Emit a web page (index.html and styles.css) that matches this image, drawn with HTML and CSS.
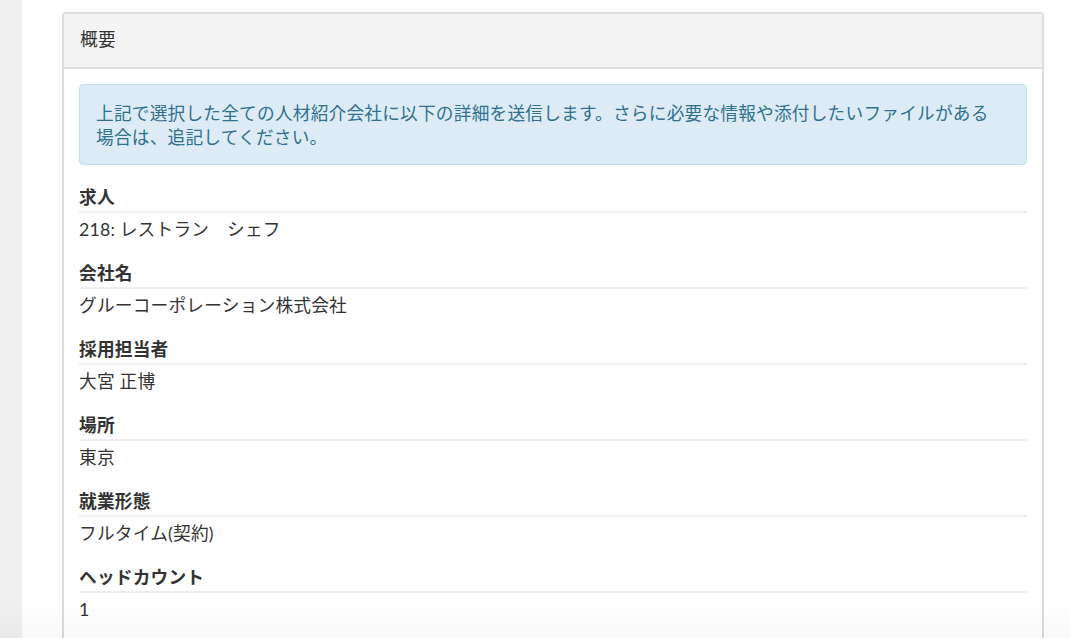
FILE: index.html
```html
<!DOCTYPE html>
<html lang="ja">
<head>
<meta charset="utf-8">
<link rel="stylesheet" href="styles.css">
</head>
<body>
<div class="layout">
  <aside class="sidebar"></aside>
  <main class="main">
    <section class="panel">
      <div class="panel-heading">概要</div>
      <div class="panel-body">
        <div class="alert">上記で選択した全ての人材紹介会社に以下の詳細を送信します。さらに必要な情報や添付したいファイルがある<br>場合は、追記してください。</div>
        <dl class="details">
          <dt>求人</dt>
          <dd>218: レストラン　シェフ</dd>
          <dt>会社名</dt>
          <dd>グルーコーポレーション株式会社</dd>
          <dt>採用担当者</dt>
          <dd>大宮 正博</dd>
          <dt>場所</dt>
          <dd>東京</dd>
          <dt>就業形態</dt>
          <dd>フルタイム(契約)</dd>
          <dt>ヘッドカウント</dt>
          <dd>1</dd>
        </dl>
      </div>
    </section>
  </main>
</div>
<div class="fade"></div>
</body>
</html>
```
FILE: styles.css
```css
html, body {
  margin: 0;
  padding: 0;
  height: 100%;
  overflow: hidden;
  background: #fff;
  font-family: Lato, "Noto Sans CJK JP", sans-serif;
  font-size: 17.7px;
  letter-spacing: 0.2px;
  line-height: 24px;
  color: #333;
}
.layout {
  display: flex;
  min-height: 100%;
}
.sidebar {
  width: 22px;
  flex: none;
  background: #f0f0f0;
}
.main {
  flex: 1;
  padding: 12px 0 0 40px;
}
.panel {
  width: 982px;
  box-sizing: border-box;
  border: 2px solid #dddddd;
  border-radius: 4px;
  background: #fff;
}
.panel-heading {
  height: 55px;
  box-sizing: border-box;
  padding: 14px 16px;
  background: #f4f4f4;
  border-bottom: 2px solid #dddddd;
  border-radius: 3px 3px 0 0;
  color: #333;
}
.panel-body {
  padding: 15px;
}
.alert {
  background: #dcebf6;
  border: 1px solid #bfe3ee;
  border-radius: 4px;
  padding: 17px 16px 14px;
  color: #31708f;
}
.details {
  margin: 19px 0 0;
}
.details dt {
  font-weight: 700;
  padding: 2px 0 1px;
  border-bottom: 2px solid #eeeeee;
}
.details dd {
  margin: 5px 0 18px;
}
.fade {
  position: fixed;
  left: 0;
  right: 0;
  bottom: 0;
  height: 40px;
  pointer-events: none;
  background: linear-gradient(rgba(0,0,0,0), rgba(0,0,0,0.025));
}
```
